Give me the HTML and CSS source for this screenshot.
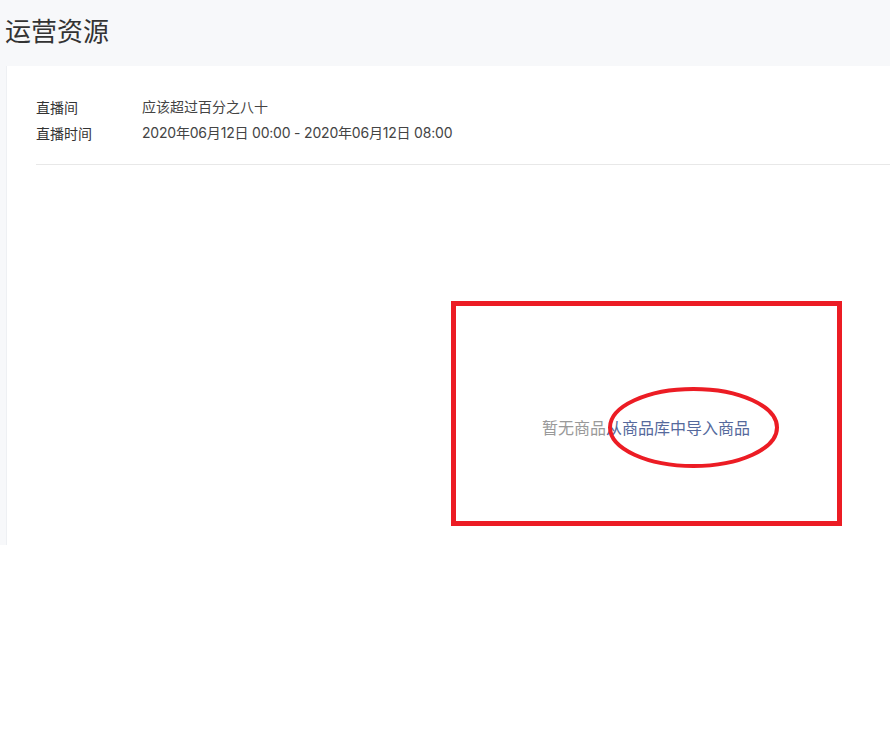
FILE: index.html
```html
<!DOCTYPE html>
<html lang="zh-CN">
<head>
  <meta charset="UTF-8" />
  <title>运营资源</title>
  <link rel="stylesheet" href="styles.css">
</head>
<body>
  <div class="page">
    <div class="header">
      <h1>运营资源</h1>
    </div>

    <div class="card">
      <div class="info">
        <div class="info-row">
          <span class="info-label">直播间</span>
          <span class="info-value">应该超过百分之八十</span>
        </div>
        <div class="info-row">
          <span class="info-label">直播时间</span>
          <span class="info-value info-date">2020年06月12日 00:00 - 2020年06月12日 08:00</span>
        </div>
      </div>

      <div class="empty">
        <span class="empty-text">暂无商品</span><a href="#" class="empty-link">从商品库中导入商品</a>
      </div>
    </div>

    <!-- annotation marks drawn over the screenshot -->
    <svg class="marks" width="894" height="545" viewBox="0 0 894 545">
      <rect x="453.5" y="303.5" width="386" height="220" fill="none" stroke="#ec1c24" stroke-width="5" />
      <ellipse cx="693.5" cy="427.5" rx="83.5" ry="38.5" fill="none" stroke="#ec1c24" stroke-width="4" />
    </svg>
  </div>
</body>
</html>
```

FILE: styles.css
```css
* { box-sizing: border-box; }
html, body {
  margin: 0;
  padding: 0;
}
body {
  background: #fff;
  font-family: "Noto Sans CJK SC", "Noto Sans", sans-serif;
  color: #333;
}

.page {
  position: relative;
  width: 890px;
  height: 545px;
  background: #f7f8fa;
  display: flex;
  flex-direction: column;
}

.header {
  height: 66px;
  padding: 10px 0 0 5px;
}
.header h1 {
  margin: 0;
  font-size: 26px;
  line-height: 40px;
  font-weight: normal;
  color: #333;
}

.card {
  flex-grow: 1;
  margin-left: 6px;
  background: #fff;
  border-left: 1px solid #eef0f3;
  padding: 28px 0 0 29px;
}

.info {
  padding-bottom: 18px;
  border-bottom: 1px solid #e8e8e8;
}
.info-row {
  display: flex;
  font-size: 14px;
  line-height: 26px;
}
.info-label {
  width: 106px;
  color: #333;
}
.info-value {
  font-family: Inter, "Noto Sans CJK SC", sans-serif;
  color: #444;
}
.info-date {
  letter-spacing: -0.2px;
}

.empty {
  padding: 250px 0 0 506px;
  font-size: 16px;
  line-height: 24px;
}
.empty-text {
  color: #999;
}
.empty-link {
  color: #55699c;
  text-decoration: none;
}

.marks {
  position: absolute;
  left: 0;
  top: 0;
  pointer-events: none;
}
```
